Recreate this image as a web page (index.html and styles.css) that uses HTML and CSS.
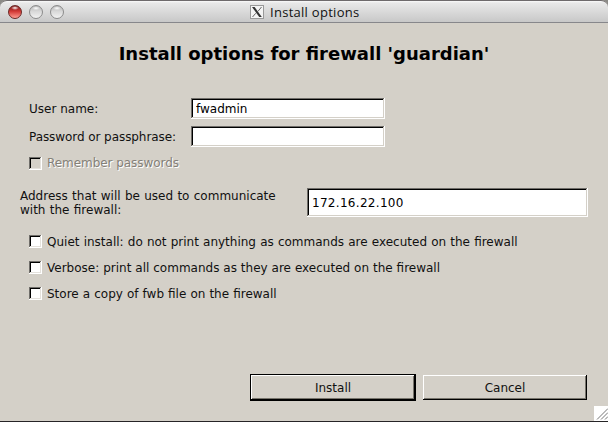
FILE: index.html
```html
<!DOCTYPE html>
<html lang="en">
<head>
<meta charset="utf-8">
<title>Install options</title>
<link rel="stylesheet" href="styles.css">
</head>
<body>
<div class="window">
  <header class="titlebar">
    <div class="lights"><i class="light red"></i><i class="light"></i><i class="light"></i></div>
    <div class="caption">
      <svg class="xicon" width="14" height="14" viewBox="0 0 14 14"><rect x=".5" y=".5" width="13" height="13" fill="#f4f4f4" stroke="#999"/><path d="M2 2h2.6l7.2 10H9.2z" fill="#333"/><path d="M11.5 2L8 6.3M5.7 8.3L2.5 12" stroke="#555" stroke-width=".9" fill="none"/></svg>
      <span class="caption-text">Install options</span>
    </div>
  </header>
  <main class="content">
    <h1><span class="heading-text">Install options for firewall 'guardian'</span></h1>
    <div class="credentials">
      <label for="user">User name:</label><input id="user" type="text" value="fwadmin">
      <label class="narrow" for="pass">Password or passphrase:</label><input id="pass" type="password">
    </div>
    <div class="check disabled"><i class="box"></i><span>Remember passwords</span></div>
    <div class="address">
      <label for="addr">Address that will be used to communicate<br>with the firewall:</label>
      <input id="addr" type="text" value="172.16.22.100">
    </div>
    <div class="options">
      <div class="check quiet"><i class="box"></i><span>Quiet install: do not print anything as commands are executed on the firewall</span></div>
      <div class="check verbose"><i class="box"></i><span>Verbose: print all commands as they are executed on the firewall</span></div>
      <div class="check store"><i class="box"></i><span>Store a copy of fwb file on the firewall</span></div>
    </div>
    <div class="actions">
      <button class="default" type="button"><span>Install</span></button>
      <button type="button"><span>Cancel</span></button>
    </div>
  </main>
  <svg class="grip" width="14" height="15" viewBox="0 0 14 15"><rect width="14" height="15" fill="#fff"/><path d="M3 13.5L14 2.5M7 13.5L14 6.5M11 13.5L14 10.5" stroke="#777" fill="none"/></svg>
</div>
</body>
</html>
```

FILE: styles.css
```css
* { box-sizing: border-box; }
body {
  margin: 0;
  width: 608px;
  height: 422px;
  overflow: hidden;
  background: #8b8a86;
  font: 12px/14px "DejaVu Sans", sans-serif;
  color: #111;
}
.window {
  position: relative;
  height: 422px;
  display: flex;
  flex-direction: column;
  background: #d4d0c8;
  border-bottom: 1px solid #262426;
  border-radius: 7px 7px 0 0;
}
.titlebar {
  position: relative;
  height: 23px;
  flex: none;
  display: flex;
  align-items: center;
  padding: 1px 0 0 8px;
  border-top: 1px solid #6e6a6c;
  border-bottom: 1px solid #87878b;
  border-radius: 7px 7px 0 0;
  background: linear-gradient(#fafafa 0, #e8e8e8 2px, #c8c8c8 100%);
}
.lights { display: flex; gap: 7px; }
.light {
  width: 14px;
  height: 14px;
  border-radius: 50%;
  border: 1px solid #8b8b8b;
  background: radial-gradient(ellipse 4px 2px at 50% 18%, #fff, transparent), linear-gradient(#b5b5b5, #d8d8d8 45%, #f2f2f2);
}
.light.red {
  border-color: #6b2725;
  background: radial-gradient(ellipse 4px 2px at 50% 16%, #fff, transparent), linear-gradient(#7a1414, #d23a36 45%, #ff9c91);
}
.caption {
  display: flex;
  align-items: center;
  gap: 6px;
  margin-left: 186px;
}
.caption-text { font: 13px/16px "Open Sans", sans-serif; letter-spacing: .28px; white-space: nowrap; }
.content { flex: 1; display: flex; flex-direction: column; }
h1 {
  margin: 20px 0 0;
  height: 22px;
  font: bold 18px/22px "DejaVu Sans", sans-serif;
  color: #000;
  text-align: center;
  white-space: nowrap;
}
.credentials {
  display: grid;
  grid-template-columns: 162px 194px;
  row-gap: 7px;
  align-items: center;
  margin: 33px 0 0 29px;
}
.narrow { letter-spacing: -.07px; }
input {
  height: 21px;
  padding: 0 3px;
  border: 0;
  border-radius: 0;
  outline: 0;
  background: #fff;
  box-shadow: inset -1px -1px #fff, inset 1px 1px #6f6d69, inset -2px -2px #d4d0c8, inset 2px 2px #000;
  font: inherit;
  color: #000;
}
#user, #pass { padding-left: 5px; }
#addr { letter-spacing: .3px; }
.check {
  display: flex;
  align-items: center;
  gap: 5px;
  height: 14px;
  margin-left: 29px;
  white-space: nowrap;
}
.box {
  width: 13px;
  height: 13px;
  background: #fff;
  box-shadow: inset -1px -1px #fff, inset 1px 1px #6f6d69, inset -2px -2px #e4e1dc, inset 2px 2px #000;
}
.disabled { margin-top: 9px; color: #848078; text-shadow: 1px 1px #fff; letter-spacing: -.05px; }
.disabled .box { background: #d4d0c8; }
.address {
  display: flex;
  align-items: center;
  margin: 18px 0 0 20px;
  height: 29px;
}
.address label { width: 287px; white-space: nowrap; word-spacing: .5px; }
.address input { width: 281px; height: 29px; padding-left: 5px; }
.options { display: flex; flex-direction: column; gap: 12px; margin-top: 17px; }
.options span { padding-top: 1px; }
.quiet { word-spacing: .35px; }
.verbose { word-spacing: .12px; }
.store { word-spacing: .25px; }
.actions {
  display: flex;
  align-items: center;
  justify-content: flex-end;
  gap: 7px;
  margin: auto 21px 20px 0;
}
button {
  width: 164px;
  height: 25px;
  padding: 0;
  border: 0;
  border-radius: 0;
  background: #d4d0c8;
  box-shadow: inset -1px -1px #000, inset 1px 1px #fff, inset -2px -2px #77746c;
  font: inherit;
  color: #111;
}
.default {
  width: 166px;
  height: 27px;
  box-shadow: inset 1px 1px #000, inset -2px -2px #000, inset 2px 2px #fff, inset -3px -3px #77746c;
}
.grip { position: absolute; right: 0; bottom: 0; }
```
